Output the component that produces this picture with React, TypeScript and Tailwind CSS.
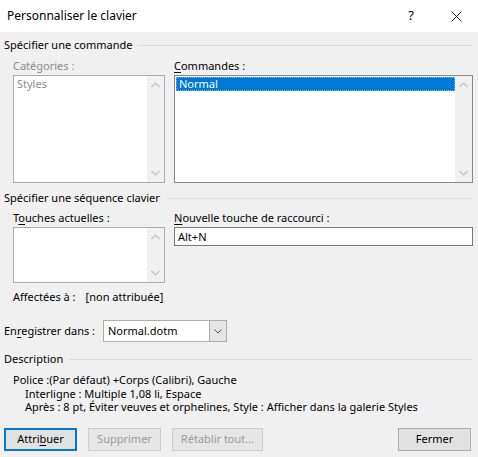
import type { ReactNode } from 'react';

const font = { fontFamily: '"Noto Sans", "Open Sans", sans-serif' };

function Chevron({ dir }: { dir: 'up' | 'down' }) {
  return (
    <svg width="9" height="6" viewBox="0 0 9 6" className="block">
      <path
        d={dir === 'up' ? 'M0.5 5 L4.5 1 L8.5 5' : 'M0.5 1 L4.5 5 L8.5 1'}
        fill="none"
        stroke="#c2c2c2"
        strokeWidth="1.2"
      />
    </svg>
  );
}

function ScrollBar() {
  return (
    <div className="w-[17px] h-full bg-[#f0f0f0] flex flex-col items-center justify-between py-[6px]">
      <Chevron dir="up" />
      <Chevron dir="down" />
    </div>
  );
}

function GroupHeading({ children }: { children: ReactNode }) {
  return (
    <div className="flex items-center pl-[4px] pr-[6px] h-[16px] leading-[16px]">
      <span>{children}</span>
      <span className="flex-1 h-px bg-[#dcdcdc] ml-[6px]" />
    </div>
  );
}

function Btn({
  children,
  kind = 'normal',
  w,
}: {
  children: ReactNode;
  kind?: 'default' | 'normal' | 'disabled';
  w: string;
}) {
  const cls =
    kind === 'default'
      ? 'border-2 border-[#0078d7] bg-[#e1e1e1] text-black'
      : kind === 'disabled'
        ? 'border border-[#cccccc] bg-[#e6e6e6] text-[#9a9a9a]'
        : 'border border-[#adadad] bg-[#e1e1e1] text-black';
  return (
    <div className={`h-[23px] flex items-center justify-center whitespace-nowrap ${w} ${cls}`}>{children}</div>
  );
}

export default function App() {
  return (
    <div
      className="w-[478px] h-[457px] bg-[#f0f0f0] text-[11px] text-black overflow-hidden whitespace-nowrap"
      style={font}
    >
      {/* title bar */}
      <div className="h-[32px] bg-white flex items-center pl-[7px]">
        <span className="text-[12px]">Personnaliser le clavier</span>
        <span className="ml-auto mr-[37px] text-[13px]">?</span>
        <svg width="11" height="11" viewBox="0 0 11 11" className="mr-[16px]">
          <path d="M0.5 0.5 L10.5 10.5 M10.5 0.5 L0.5 10.5" stroke="#222" strokeWidth="1" />
        </svg>
      </div>

      <div className="mt-[5px]">
        <GroupHeading>Spécifier une commande</GroupHeading>
      </div>

      <div className="flex pl-[13px] mt-[5px]">
        <div className="w-[152px]">
          <div className="h-[16px] leading-[16px] text-[#8d8d8d]">Catégories :</div>
          <div className="mt-[1px] h-[108px] border border-[#adadad] bg-white flex">
            <div className="flex-1 pl-[3px] text-[#8d8d8d] leading-[14px] pt-px">Styles</div>
            <ScrollBar />
          </div>
        </div>
        <div className="w-[299px] ml-[9px]">
          <div className="h-[16px] leading-[16px]">
            <span className="underline underline-offset-2">C</span>ommandes :
          </div>
          <div className="mt-[1px] h-[108px] border border-[#828790] bg-white flex">
            <div className="flex-1 pt-px pl-px">
              <div className="h-[14px] leading-[12px] bg-[#0078d7] text-white pl-[2px] border border-dotted border-[#7fb6e6]">
                Normal
              </div>
            </div>
            <ScrollBar />
          </div>
        </div>
      </div>

      <div className="mt-[7px]">
        <GroupHeading>Spécifier une séquence clavier</GroupHeading>
      </div>

      <div className="flex pl-[13px] mt-[4px]">
        <div className="w-[152px]">
          <div className="h-[16px] leading-[16px]">
            T<span className="underline underline-offset-2">o</span>uches actuelles :
          </div>
          <div className="mt-px h-[56px] border border-[#adadad] bg-white flex">
            <div className="flex-1" />
            <ScrollBar />
          </div>
        </div>
        <div className="w-[299px] ml-[9px]">
          <div className="h-[16px] leading-[16px]">
            <span className="underline underline-offset-2">N</span>ouvelle touche de raccourci :
          </div>
          <div className="mt-px h-[19px] border border-[#7a7a7a] bg-white pl-[3px] leading-[17px]">Alt+N</div>
        </div>
      </div>

      <div className="flex pl-[13px] mt-[6px] h-[16px] leading-[16px]">
        <span>Affectées à :</span>
        <span className="ml-[10px]">[non attribuée]</span>
      </div>

      <div className="flex items-center pl-[4px] mt-[15px]">
        <span className="w-[99px]">
          En<span className="underline underline-offset-2">r</span>egistrer dans :
        </span>
        <div className="w-[124px] h-[22px] border border-[#adadad] bg-white flex">
          <div className="flex-1 pl-[4px] leading-[20px]">Normal.dotm</div>
          <div className="w-[17px] h-full bg-[#e5e5e5] border-l border-[#adadad] flex items-center justify-center">
            <svg width="8" height="5" viewBox="0 0 8 5">
              <path d="M0.5 0.5 L4 4 L7.5 0.5" fill="none" stroke="#555" strokeWidth="1" />
            </svg>
          </div>
        </div>
      </div>

      <div className="mt-[9px]">
        <GroupHeading>Description</GroupHeading>
      </div>

      <div className="mt-[6px] leading-[13.5px]">
        <div className="pl-[13px]">Police :(Par défaut) +Corps (Calibri), Gauche</div>
        <div className="pl-[25px]">Interligne : Multiple 1,08 li, Espace</div>
        <div className="pl-[25px]">Après : 8 pt, Éviter veuves et orphelines, Style : Afficher dans la galerie Styles</div>
      </div>

      <div className="flex pl-[4px] pr-[7px] mt-[14px]">
        <Btn kind="default" w="w-[73px]">
          Attri<span className="underline underline-offset-2">b</span>uer
        </Btn>
        <div className="ml-[11px]">
          <Btn kind="disabled" w="w-[73px]">Supprimer</Btn>
        </div>
        <div className="ml-[11px]">
          <Btn kind="disabled" w="w-[91px]">Rétablir tout...</Btn>
        </div>
        <div className="ml-auto">
          <Btn w="w-[73px]">Fermer</Btn>
        </div>
      </div>
    </div>
  );
}
